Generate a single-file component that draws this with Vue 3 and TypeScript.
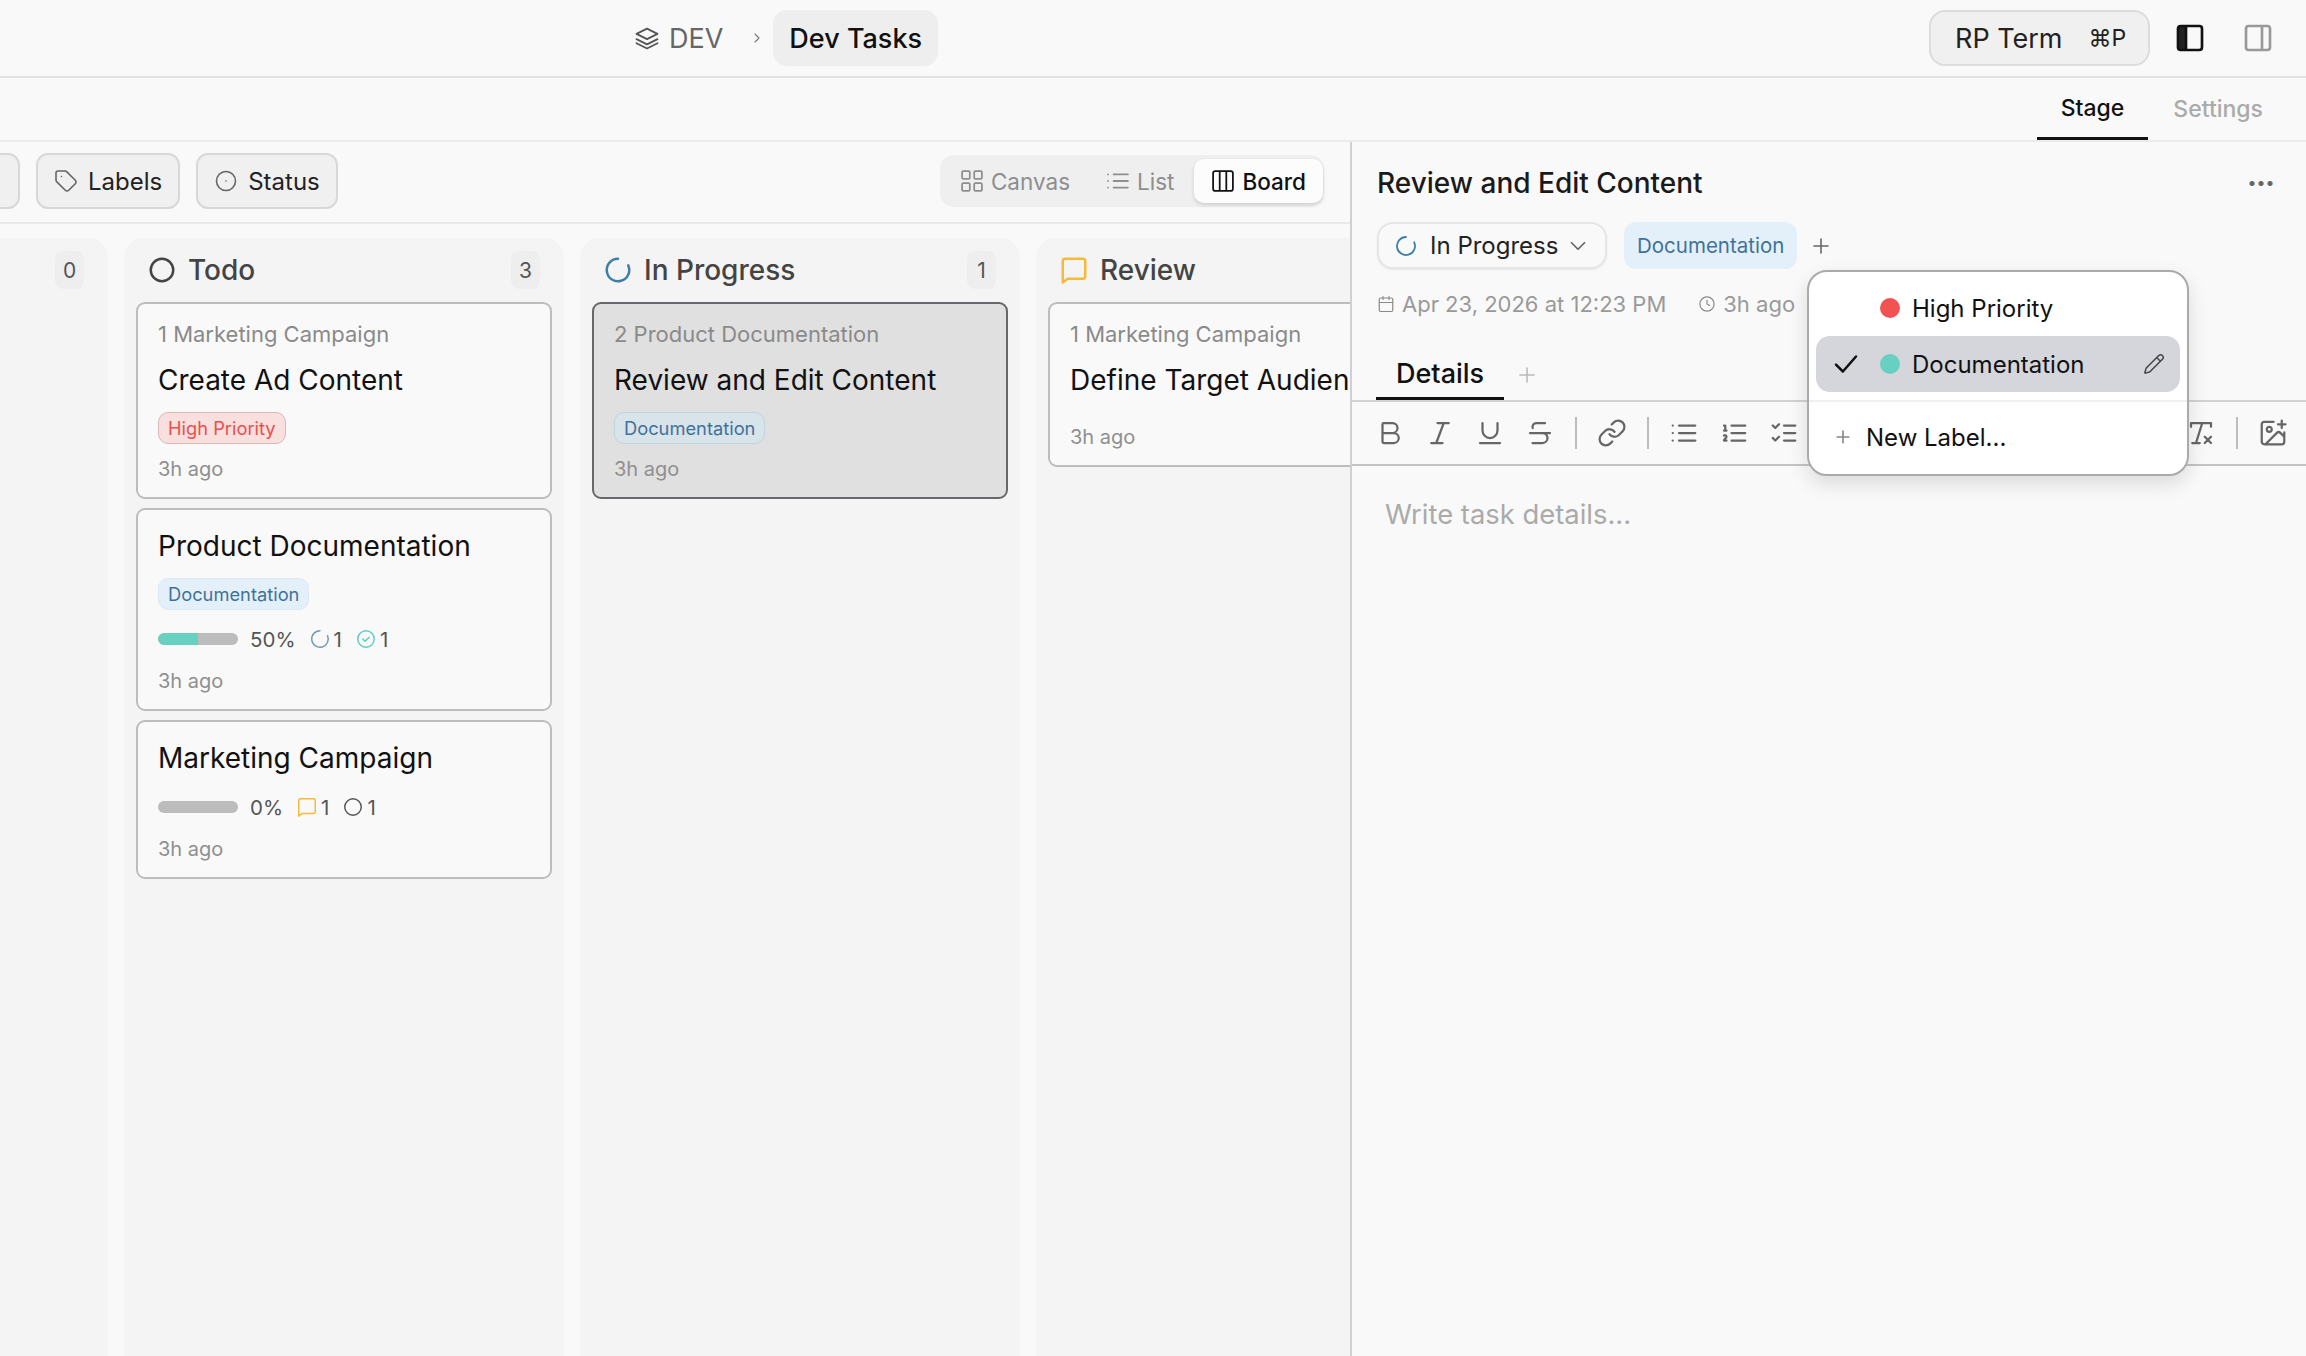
<script setup lang="ts">
interface Label {
  text: string
  kind: 'red' | 'blue'
}

interface Stat {
  icon: string
  color: string
  value: number
}

interface Card {
  parent?: string
  title: string
  label?: Label
  progress?: number
  stats?: Stat[]
  selected?: boolean
}

interface Column {
  name: string
  icon: string
  color: string
  cards: Card[]
  count: number
}

// lucide-like outlines, 24x24 box
const icons: Record<string, string> = {
  layers: 'M12 4l9 4.5-9 4.5-9-4.5z M3 13l9 4.5 9-4.5 M3 16.5l9 4.5 9-4.5',
  chevronRight: 'M9 6l6 6-6 6',
  chevronDown: 'M6 9l6 6 6-6',
  tag: 'M12.6 2.6A2 2 0 0 0 11.2 2H4a2 2 0 0 0-2 2v7.2a2 2 0 0 0 .6 1.4l8.7 8.7a2.4 2.4 0 0 0 3.4 0l6.6-6.6a2.4 2.4 0 0 0 0-3.4z M7.5 7.5h.01',
  dotCircle: 'M12 2.5a9.5 9.5 0 1 0 0 19 9.5 9.5 0 0 0 0-19z M12 12h.01',
  grid: 'M4 3h5a1 1 0 0 1 1 1v5a1 1 0 0 1-1 1H4a1 1 0 0 1-1-1V4a1 1 0 0 1 1-1z M15 3h5a1 1 0 0 1 1 1v5a1 1 0 0 1-1 1h-5a1 1 0 0 1-1-1V4a1 1 0 0 1 1-1z M4 14h5a1 1 0 0 1 1 1v5a1 1 0 0 1-1 1H4a1 1 0 0 1-1-1v-5a1 1 0 0 1 1-1z M15 14h5a1 1 0 0 1 1 1v5a1 1 0 0 1-1 1h-5a1 1 0 0 1-1-1v-5a1 1 0 0 1 1-1z',
  list: 'M8 6h13 M8 12h13 M8 18h13 M3 6h.01 M3 12h.01 M3 18h.01',
  board: 'M5 3h14a2 2 0 0 1 2 2v14a2 2 0 0 1-2 2H5a2 2 0 0 1-2-2V5a2 2 0 0 1 2-2z M9 3v18 M15 3v18',
  circle: 'M12 3a9 9 0 1 0 0 18 9 9 0 0 0 0-18z',
  progress: 'M12 3a9 9 0 1 0 8.2 5.3',
  review: 'M5 3h14a2 2 0 0 1 2 2v12a2 2 0 0 1-2 2H7l-4 3V5a2 2 0 0 1 2-2z',
  done: 'M12 3a9 9 0 1 0 0 18 9 9 0 0 0 0-18z M8.5 12l2.5 2.5 4.5-4.5',
  plus: 'M5 12h14 M12 5v14',
  calendar: 'M8 2v4 M16 2v4 M5 4h14a2 2 0 0 1 2 2v14a2 2 0 0 1-2 2H5a2 2 0 0 1-2-2V6a2 2 0 0 1 2-2z M3 10h18',
  clock: 'M12 2.5a9.5 9.5 0 1 0 0 19 9.5 9.5 0 0 0 0-19z M12 7v5l3.5 2',
  bold: 'M6 12h9a4 4 0 0 1 0 8H7a1 1 0 0 1-1-1V5a1 1 0 0 1 1-1h7a4 4 0 0 1 0 8',
  italic: 'M19 4h-9 M14 20H5 M15 4L9 20',
  underline: 'M6 4v6a6 6 0 0 0 12 0V4 M4 20h16',
  strike: 'M16 4H9a3 3 0 0 0-2.83 4 M14 12a4 4 0 0 1 0 8H6 M4 12h16',
  link: 'M10 13a5 5 0 0 0 7.54.54l3-3a5 5 0 0 0-7.07-7.07l-1.72 1.71 M14 11a5 5 0 0 0-7.54-.54l-3 3a5 5 0 0 0 7.07 7.07l1.71-1.71',
  ordered: 'M10 6h11 M10 12h11 M10 18h11 M4 6h1v4 M4 10h2 M6 18H4c0-1 2-2 2-3s-1-1.5-2-1',
  checks: 'M3 6l2 2 3-3 M3 16l2 2 3-3 M12 6h9 M12 12h9 M12 18h9',
  heading: 'M6 4v16 M18 4v16 M6 12h12',
  quote: 'M5 6h14 M5 12h14 M5 18h14',
  clear: 'M4 7V4h16v3 M5 20h6 M13 4L8 20 M15 15l5 5 M20 15l-5 5',
  imagePlus: 'M16 5h6 M19 2v6 M21 11.5V19a2 2 0 0 1-2 2H5a2 2 0 0 1-2-2V5a2 2 0 0 1 2-2h7.5 M21 15l-3.1-3.1a2 2 0 0 0-2.8 0L6 21 M9 7a2 2 0 1 0 0 4 2 2 0 0 0 0-4z',
  check: 'M4 12.5l5.5 5.5L20 6',
  pencil: 'M21.17 6.81a1 1 0 0 0-3.99-3.99L3.84 16.17a2 2 0 0 0-.5.83l-1.32 4.35a.5.5 0 0 0 .62.62l4.35-1.32a2 2 0 0 0 .83-.5z M15 5l4 4',
  panelRight: 'M5 3h14a2 2 0 0 1 2 2v14a2 2 0 0 1-2 2H5a2 2 0 0 1-2-2V5a2 2 0 0 1 2-2z M15 3v18',
  panelLeft: 'M5 3h14a2 2 0 0 1 2 2v14a2 2 0 0 1-2 2H5a2 2 0 0 1-2-2V5a2 2 0 0 1 2-2z M9 3v18',
}

const docLabel: Label = { text: 'Documentation', kind: 'blue' }

const columns: Column[] = [
  // scrolled out on the left, only its count shows
  { name: '', icon: 'circle', color: '#444', count: 0, cards: [] },
  {
    name: 'Todo',
    icon: 'circle',
    color: '#444',
    count: 3,
    cards: [
      {
        parent: '1 Marketing Campaign',
        title: 'Create Ad Content',
        label: { text: 'High Priority', kind: 'red' },
      },
      {
        title: 'Product Documentation',
        label: docLabel,
        progress: 50,
        stats: [
          { icon: 'progress', color: '#6d9cb5', value: 1 },
          { icon: 'done', color: '#5ccfbe', value: 1 },
        ],
      },
      {
        title: 'Marketing Campaign',
        progress: 0,
        stats: [
          { icon: 'review', color: '#f6b93b', value: 1 },
          { icon: 'circle', color: '#555', value: 1 },
        ],
      },
    ],
  },
  {
    name: 'In Progress',
    icon: 'progress',
    color: '#3f7fa6',
    count: 1,
    cards: [
      {
        parent: '2 Product Documentation',
        title: 'Review and Edit Content',
        label: docLabel,
        selected: true,
      },
    ],
  },
  {
    name: 'Review',
    icon: 'review',
    color: '#f6b93b',
    count: 1,
    cards: [{ parent: '1 Marketing Campaign', title: 'Define Target Audience' }],
  },
]

const formatGroups = [
  ['bold', 'italic', 'underline', 'strike'],
  ['link'],
  ['list', 'ordered', 'checks', 'heading', 'quote'],
]
</script>

<template>
  <div class="app">
    <header class="topbar">
      <nav class="crumbs">
        <svg class="icon crumb-icon" viewBox="0 0 24 24"><path :d="icons.layers" /></svg>
        <span class="crumb-root">DEV</span>
        <svg class="icon crumb-sep" viewBox="0 0 24 24"><path :d="icons.chevronRight" /></svg>
        <span class="crumb-current">Dev Tasks</span>
      </nav>
      <div class="top-actions">
        <button class="term-btn">RP Term<span class="shortcut">⌘P</span></button>
        <svg class="panel-icon" viewBox="0 0 24 24">
          <path class="panel-fill" d="M5 3h4v18H5a2 2 0 0 1-2-2V5a2 2 0 0 1 2-2z" />
          <path :d="icons.panelLeft" />
        </svg>
        <svg class="panel-icon muted" viewBox="0 0 24 24"><path :d="icons.panelRight" /></svg>
      </div>
    </header>

    <div class="page-tabs">
      <span class="page-tab active">Stage</span>
      <span class="page-tab">Settings</span>
    </div>

    <main class="main">
      <section class="board-panel">
        <div class="filters">
          <div class="filter-group">
            <button class="filter-btn cut"></button>
            <button class="filter-btn">
              <svg class="icon" viewBox="0 0 24 24"><path :d="icons.tag" /></svg>Labels
            </button>
            <button class="filter-btn">
              <svg class="icon" viewBox="0 0 24 24"><path :d="icons.dotCircle" /></svg>Status
            </button>
          </div>
          <div class="view-switch">
            <span class="view-item">
              <svg class="icon" viewBox="2 2 20 20"><path :d="icons.grid" /></svg>Canvas
            </span>
            <span class="view-item">
              <svg class="icon" viewBox="2 2 20 20"><path :d="icons.list" /></svg>List
            </span>
            <span class="view-item active">
              <svg class="icon" viewBox="2 2 20 20"><path :d="icons.board" /></svg>Board
            </span>
          </div>
        </div>

        <div class="columns">
          <div v-for="col in columns" :key="col.name" class="column">
            <div class="col-head">
              <svg class="col-icon" viewBox="0 0 24 24" :style="{ stroke: col.color }">
                <path :d="icons[col.icon]" />
              </svg>
              <span class="col-name">{{ col.name }}</span>
              <span class="col-count">{{ col.count }}</span>
            </div>
            <div class="cards">
              <article
                v-for="card in col.cards"
                :key="card.title"
                class="card"
                :class="{ selected: card.selected }"
              >
                <div v-if="card.parent" class="card-parent">{{ card.parent }}</div>
                <div class="card-title">{{ card.title }}</div>
                <div v-if="card.label" class="pill" :class="card.label.kind">{{ card.label.text }}</div>
                <div v-if="card.progress !== undefined" class="progress-row">
                  <div class="bar">
                    <div class="bar-fill" :style="{ width: card.progress + '%' }"></div>
                  </div>
                  <span class="percent">{{ card.progress }}%</span>
                  <span v-for="stat in card.stats" :key="stat.icon" class="stat">
                    <svg class="stat-icon" viewBox="0 0 24 24" :style="{ stroke: stat.color }">
                      <path :d="icons[stat.icon]" />
                    </svg>
                    {{ stat.value }}
                  </span>
                </div>
                <div class="card-time">3h ago</div>
              </article>
            </div>
          </div>
        </div>
      </section>

      <aside class="detail">
        <div class="detail-head">
          <div class="detail-title-row">
            <h1 class="detail-title">Review and Edit Content</h1>
            <span class="more">···</span>
          </div>
          <div class="detail-meta">
            <button class="status-btn">
              <svg class="status-spin" viewBox="0 0 24 24"><path :d="icons.progress" /></svg>
              In Progress
              <svg class="icon status-chev" viewBox="0 0 24 24"><path :d="icons.chevronDown" /></svg>
            </button>
            <span class="meta-label">Documentation</span>
            <svg class="icon meta-plus" viewBox="0 0 24 24"><path :d="icons.plus" /></svg>
          </div>
          <div class="detail-dates">
            <svg class="icon date-icon" viewBox="0 0 24 24"><path :d="icons.calendar" /></svg>
            <span>Apr 23, 2026 at 12:23 PM</span>
            <svg class="icon date-icon clock" viewBox="0 0 24 24"><path :d="icons.clock" /></svg>
            <span>3h ago</span>
          </div>
        </div>

        <div class="detail-tabs">
          <span class="detail-tab">Details</span>
          <svg class="icon tab-plus" viewBox="0 0 24 24"><path :d="icons.plus" /></svg>
        </div>

        <div class="format-bar">
          <template v-for="(group, i) in formatGroups" :key="i">
            <i v-if="i > 0" class="format-sep"></i>
            <span v-for="name in group" :key="name" class="format-btn">
              <svg viewBox="0 0 24 24"><path :d="icons[name]" /></svg>
            </span>
          </template>
          <span class="format-btn push">
            <svg viewBox="0 0 24 24"><path :d="icons.clear" /></svg>
          </span>
          <i class="format-sep"></i>
          <span class="format-btn">
            <svg viewBox="0 0 24 24"><path :d="icons.imagePlus" /></svg>
          </span>
        </div>

        <div class="editor">Write task details...</div>

        <div class="label-menu">
          <div class="menu-item">
            <span class="menu-check"></span>
            <span class="menu-dot red"></span>
            High Priority
          </div>
          <div class="menu-item current">
            <span class="menu-check">
              <svg viewBox="0 0 24 24"><path :d="icons.check" /></svg>
            </span>
            <span class="menu-dot teal"></span>
            Documentation
            <svg class="menu-pencil" viewBox="0 0 24 24"><path :d="icons.pencil" /></svg>
          </div>
          <div class="menu-divider"></div>
          <div class="menu-new">
            <svg viewBox="0 0 24 24"><path :d="icons.plus" /></svg>
            New Label...
          </div>
        </div>
      </aside>
    </main>
  </div>
</template>

<style scoped>
.app {
  width: 2306px;
  height: 1356px;
  display: flex;
  flex-direction: column;
  overflow: hidden;
  background: #f9f9f9;
  color: #111;
  font-family: Inter, "Liberation Sans", sans-serif;
}

.icon {
  width: 24px;
  height: 24px;
  flex: none;
  fill: none;
  stroke: currentColor;
  stroke-width: 1.6;
  stroke-linecap: round;
  stroke-linejoin: round;
}

button {
  font-family: inherit;
  color: inherit;
}

.topbar {
  height: 78px;
  flex: none;
  box-sizing: border-box;
  border-bottom: 2px solid #e2e2e2;
  display: flex;
  align-items: center;
  justify-content: space-between;
  padding: 0 32px 0 633px;
}

.crumbs {
  display: flex;
  align-items: center;
  font-size: 27px;
}

.crumb-icon {
  width: 28px;
  height: 28px;
  color: #555;
  margin-right: 8px;
}

.crumb-root {
  color: #666;
}

.crumb-sep {
  width: 16px;
  height: 16px;
  color: #777;
  margin: 0 8px 0 26px;
}

.crumb-current {
  height: 56px;
  padding: 0 16px;
  display: flex;
  align-items: center;
  border-radius: 14px;
  background: #eeeeee;
  font-weight: 500;
}

.top-actions {
  display: flex;
  align-items: center;
}

.term-btn {
  width: 221px;
  height: 56px;
  box-sizing: border-box;
  border: 2px solid #dcdcdf;
  border-radius: 16px;
  background: #f0f0f0;
  font-size: 27px;
  padding: 0 0 0 24px;
  display: flex;
  align-items: center;
  color: #222;
}

.shortcut {
  font-size: 23px;
  margin-left: 26px;
}

.panel-icon {
  width: 32px;
  height: 32px;
  fill: none;
  stroke: #111;
  stroke-width: 2;
  margin-left: 24px;
}

.panel-icon.muted {
  stroke: #999;
  margin-left: 36px;
}

.panel-fill {
  fill: #222;
  stroke: none;
}

.page-tabs {
  height: 64px;
  flex: none;
  box-sizing: border-box;
  border-bottom: 2px solid #ebebeb;
  display: flex;
  justify-content: flex-end;
  padding-right: 18px;
}

.page-tab {
  display: flex;
  align-items: center;
  height: 62px;
  box-sizing: border-box;
  padding: 0 25px;
  font-size: 23px;
  font-weight: 500;
  color: #aaa;
}

.page-tab.active {
  color: #111;
  padding: 0 24px;
  border-bottom: 3px solid #111;
}

.main {
  flex: 1;
  min-height: 0;
  display: flex;
  position: relative;
}

.board-panel {
  width: 1350px;
  flex: none;
  display: flex;
  flex-direction: column;
  overflow: hidden;
}

.filters {
  height: 82px;
  flex: none;
  box-sizing: border-box;
  border-bottom: 2px solid #e8e8e8;
  display: flex;
  align-items: center;
  justify-content: space-between;
  padding: 0 26px 2px 0;
}

.filter-group {
  display: flex;
  gap: 16px;
  margin-left: -60px;
}

.filter-btn {
  height: 56px;
  box-sizing: border-box;
  padding: 0 16px;
  display: flex;
  align-items: center;
  gap: 10px;
  border: 2px solid #d8d8d8;
  border-radius: 12px;
  background: #f0f0f0;
  font-size: 24px;
  color: #222;
}

.filter-btn .icon {
  color: #666;
}

.filter-btn.cut {
  width: 80px;
}

.view-switch {
  height: 52px;
  box-sizing: border-box;
  padding: 4px 1px 4px 3px;
  display: flex;
  align-items: center;
  border-radius: 14px;
  background: #efefef;
}

.view-item {
  display: flex;
  align-items: center;
  gap: 8px;
  height: 44px;
  padding: 0 19px 0 18px;
  font-size: 22.5px;
  color: #8e8e8e;
}

.view-item .icon {
  width: 22px;
  height: 22px;
}

.view-item.active {
  margin-left: 1px;
  padding-right: 17px;
  background: #fcfcfc;
  border-radius: 10px;
  color: #111;
  font-weight: 500;
  box-shadow: 0 2px 4px rgba(0, 0, 0, 0.14);
}

.columns {
  flex: 1;
  min-height: 0;
  display: flex;
  gap: 16px;
  padding-top: 14px;
  margin-left: -332px;
}

.column {
  width: 440px;
  flex: none;
  box-sizing: border-box;
  padding: 0 12px;
  background: #f4f4f4;
  border-radius: 20px 20px 0 0;
}

.col-head {
  height: 64px;
  display: flex;
  align-items: center;
  padding-left: 11px;
}

.col-icon {
  width: 30px;
  height: 30px;
  fill: none;
  stroke-width: 2;
  stroke-linecap: round;
  stroke-linejoin: round;
}

.col-name {
  margin-left: 11px;
  font-size: 28px;
  font-weight: 500;
  color: #444;
}

.col-count {
  margin-left: auto;
  margin-right: 12px;
  width: 29px;
  height: 38px;
  display: flex;
  align-items: center;
  justify-content: center;
  border-radius: 8px;
  background: #eeeeee;
  font-size: 21px;
  color: #555;
}

.cards {
  display: flex;
  flex-direction: column;
  gap: 9px;
}

.card {
  box-sizing: border-box;
  width: 416px;
  padding: 17px 20px 15px;
  border: 2px solid #bdbdbd;
  border-radius: 9px;
  background: #f9f9f9;
}

.card.selected {
  border-color: #67676c;
  background: #e0e0e0;
}

.card-parent {
  font-size: 22px;
  line-height: 26px;
  color: #8a8a8a;
}

.card-title {
  margin-top: 1px;
  font-size: 28px;
  line-height: 36px;
  color: #111;
  white-space: nowrap;
}

.card-parent + .card-title {
  margin-top: 15px;
}

.pill {
  display: inline-flex;
  align-items: center;
  box-sizing: border-box;
  height: 32px;
  margin-top: 14px;
  padding: 0 9px;
  border-radius: 10px;
  font-size: 18.3px;
}

.pill.red {
  color: #ec4e4e;
  background: #f9dfdd;
  border: 1px solid #d8b9b9;
}

.pill.blue {
  color: #3f729b;
  background: #e4f0f9;
  border: 1px solid #dde9f3;
}

.selected .pill.blue {
  background: #d9e3ea;
  border-color: #bcd8dc;
}

.progress-row {
  margin-top: 16px;
  height: 26px;
  display: flex;
  align-items: center;
  font-size: 20.5px;
  color: #555;
}

.card-title + .progress-row {
  margin-top: 18px;
}

.bar {
  width: 80px;
  height: 12px;
  border-radius: 6px;
  background: #bcbcbc;
  overflow: hidden;
}

.bar-fill {
  height: 100%;
  background: #68d0c0;
  border-radius: 6px 0 0 6px;
}

.percent {
  margin-left: 12px;
}

.stat {
  display: flex;
  align-items: center;
  gap: 3px;
  margin-left: 13px;
}

.stat-icon {
  width: 22px;
  height: 22px;
  fill: none;
  stroke-width: 1.6;
  stroke-linecap: round;
  stroke-linejoin: round;
}

.card-time {
  margin-top: 12px;
  font-size: 20px;
  line-height: 26px;
  color: #8f8f8f;
}

.progress-row + .card-time {
  margin-top: 16px;
}

.card-title + .card-time {
  margin-top: 26px;
}

.detail {
  flex: 1;
  min-width: 0;
  position: relative;
  border-left: 2px solid #d0d0d4;
  display: flex;
  flex-direction: column;
}

.detail-head {
  padding: 23px 24px 0 25px;
}

.detail-title-row {
  display: flex;
  align-items: center;
  justify-content: space-between;
}

.detail-title {
  margin: 0;
  font-size: 28px;
  line-height: 36px;
  font-weight: 500;
  color: #1a1a1a;
}

.more {
  font-size: 30px;
  line-height: 36px;
  font-weight: 700;
  letter-spacing: -1px;
  color: #666;
  margin-right: 8px;
}

.detail-meta {
  margin-top: 21px;
  display: flex;
  align-items: center;
}

.status-btn {
  width: 230px;
  height: 47px;
  box-sizing: border-box;
  padding: 0 0 0 15px;
  display: flex;
  align-items: center;
  border: 2px solid #e6e6e6;
  border-radius: 16px;
  background: #f9f9f9;
  font-size: 24px;
  color: #222;
  box-shadow: 0 1px 2px rgba(0, 0, 0, 0.08);
}

.status-spin {
  width: 24px;
  height: 24px;
  margin-right: 12px;
  fill: none;
  stroke: #3f7fa6;
  stroke-width: 1.8;
  stroke-linecap: round;
}

.status-chev {
  margin-left: 7px;
  width: 26px;
  height: 26px;
  color: #666;
}

.meta-label {
  margin-left: 17px;
  height: 47px;
  box-sizing: border-box;
  display: flex;
  align-items: center;
  padding: 0 13px;
  border-radius: 12px;
  background: #e4f0f9;
  font-size: 20.5px;
  color: #3f729b;
}

.meta-plus {
  margin-left: 12px;
  color: #666;
}

.detail-dates {
  margin-top: 21px;
  height: 28px;
  display: flex;
  align-items: center;
  font-size: 22px;
  color: #999;
}

.date-icon {
  width: 18px;
  height: 18px;
  margin-right: 7px;
  color: #8a8a8a;
}

.date-icon.clock {
  margin-left: 32px;
}

.detail-tabs {
  margin-top: 32px;
  height: 52px;
  flex: none;
  box-sizing: border-box;
  padding-left: 24px;
  border-bottom: 2px solid #d2d2d2;
  display: flex;
  align-items: flex-start;
}

.detail-tab {
  height: 50px;
  box-sizing: border-box;
  padding: 0 20px;
  display: flex;
  align-items: center;
  border-bottom: 3px solid #111;
  font-size: 27px;
  font-weight: 500;
}

.tab-plus {
  margin: 13px 0 0 11px;
  color: #bbb;
}

.format-bar {
  height: 64px;
  flex: none;
  box-sizing: border-box;
  padding: 0 8px 0 13px;
  border-bottom: 2px solid #c4c4c4;
  display: flex;
  align-items: center;
}

.format-btn {
  width: 50px;
  height: 50px;
  flex: none;
  display: flex;
  align-items: center;
  justify-content: center;
}

.format-btn svg {
  width: 30px;
  height: 30px;
  fill: none;
  stroke: #666;
  stroke-width: 1.8;
  stroke-linecap: round;
  stroke-linejoin: round;
}

.format-btn.push {
  margin-left: auto;
}

.format-sep {
  width: 2px;
  height: 32px;
  flex: none;
  margin: 0 10px;
  background: #bdbdbd;
}

.editor {
  padding: 29px 33px;
  font-size: 27.4px;
  line-height: 38px;
  color: #aaa;
}

.label-menu {
  position: absolute;
  left: 455px;
  top: 128px;
  z-index: 5;
  width: 382px;
  height: 206px;
  box-sizing: border-box;
  padding: 8px 7px;
  border: 2px solid #aaa;
  border-radius: 20px;
  background: #fff;
  box-shadow: 0 8px 20px rgba(0, 0, 0, 0.12);
}

.menu-item {
  height: 56px;
  display: flex;
  align-items: center;
  border-radius: 14px;
  font-size: 24px;
  color: #111;
}

.menu-item.current {
  background: #d5d6dc;
}

.menu-check {
  width: 64px;
  flex: none;
  display: flex;
  padding-left: 15px;
  box-sizing: border-box;
}

.menu-check svg {
  width: 30px;
  height: 30px;
  fill: none;
  stroke: #111;
  stroke-width: 2;
  stroke-linecap: round;
  stroke-linejoin: round;
}

.menu-dot {
  width: 20px;
  height: 20px;
  margin-right: 12px;
  border-radius: 50%;
}

.menu-dot.red {
  background: #f25252;
}

.menu-dot.teal {
  background: #68d0c0;
}

.menu-pencil {
  width: 22px;
  height: 22px;
  margin-left: auto;
  margin-right: 15px;
  fill: none;
  stroke: #444;
  stroke-width: 1.6;
  stroke-linecap: round;
  stroke-linejoin: round;
}

.menu-divider {
  height: 2px;
  margin: 8px -7px 0;
  background: #f0f0f0;
}

.menu-new {
  height: 70px;
  padding-left: 17px;
  display: flex;
  align-items: center;
  gap: 13px;
  font-size: 24px;
  color: #111;
}

.menu-new svg {
  width: 20px;
  height: 20px;
  fill: none;
  stroke: #888;
  stroke-width: 2;
  stroke-linecap: round;
}
</style>

<style>
body {
  background: #f9f9f9;
}
</style>
